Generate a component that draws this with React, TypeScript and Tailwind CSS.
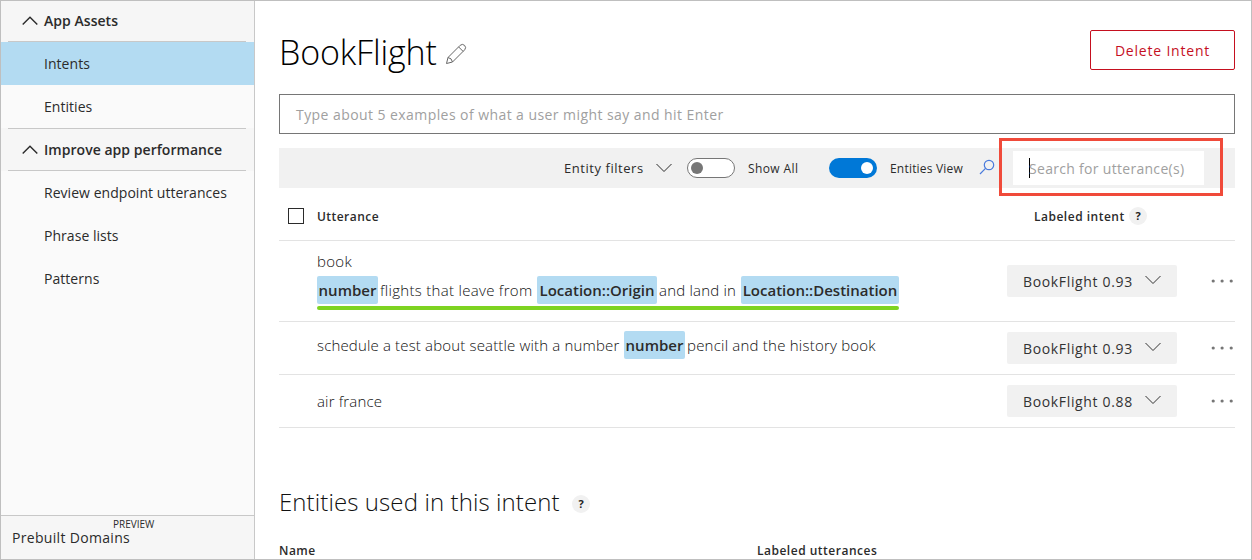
import type { ReactNode } from "react";

function Chevron({ className, d = "M0.5 1 8 8.5 15.5 1" }: { className: string; d?: string }) {
  return (
    <svg viewBox="0 0 16 10" className={className} fill="none" stroke="currentColor">
      <path d={d} />
    </svg>
  );
}

function SectionHeader({ children, className }: { children: ReactNode; className: string }) {
  return (
    <div className={`bg-[#f6f6f6] pr-2 pl-[7px] ${className}`}>
      <div className="flex h-full items-center border-b border-[#c8c8c8] pl-[14px] font-semibold tracking-[0.04px]">
        <Chevron className="mr-[6px] h-[10px] w-4 stroke-[1.4]" d="M0.7 8.6 8 1.2 15.3 8.6" />
        {children}
      </div>
    </div>
  );
}

function Item({ children, active }: { children: ReactNode; active?: boolean }) {
  return (
    <div className={`flex h-[43px] items-center pl-[43px] tracking-[0.04px] ${active ? "bg-[#b3dbf2]" : ""}`}>
      {children}
    </div>
  );
}

function Help({ className }: { className: string }) {
  return (
    <span
      className={`flex size-[18px] items-center justify-center rounded-full bg-[#f1f1f1] text-[11px] font-bold text-[#222] ${className}`}
    >
      ?
    </span>
  );
}

function Entity({ children, className }: { children: ReactNode; className: string }) {
  return (
    <span
      className={`flex h-7 items-center justify-center rounded-[2px] bg-[#b3dbf2] font-semibold tracking-normal text-[#2b2b2b] ${className}`}
    >
      {children}
    </span>
  );
}

function Row({ children, className, score }: { children: ReactNode; className: string; score: string }) {
  return (
    <div className={`flex items-center border-b border-[#e3e3e3] pl-[38px] ${className}`}>
      <div className="w-[690px] text-[15px] font-light text-[#111]">{children}</div>
      <div className="flex h-8 w-[170px] items-center rounded-[2px] bg-[#f1f1f1] pt-px pl-4 text-sm text-[#333]">
        <span className="w-[122px] tracking-[0.65px]">BookFlight {score}</span>
        <Chevron className="mb-[4px] h-[10px] w-4" />
      </div>
      <svg viewBox="0 0 24 4" className="ml-[34px] h-1 w-6" fill="#767676">
        <circle cx="2.2" cy="2" r="1.6" />
        <circle cx="11.1" cy="2" r="1.6" />
        <circle cx="20.2" cy="2" r="1.6" />
      </svg>
    </div>
  );
}

export default function App() {
  return (
    <div className="flex h-[560px] w-[1252px] overflow-hidden border border-[#bfbfbf] bg-white font-['Open_Sans','Noto_Sans',sans-serif] whitespace-nowrap text-[#2b2b2b]">
      <aside className="flex w-[254px] shrink-0 flex-col border-r border-[#c8c8c8] bg-[#fafafa] text-sm">
        <SectionHeader className="h-[41px]">App Assets</SectionHeader>
        <Item active>Intents</Item>
        <Item>Entities</Item>
        <div className="bg-[#f6f6f6] pr-2 pl-[7px]">
          <div className="border-t border-[#c8c8c8]" />
        </div>
        <SectionHeader className="h-[42px]">Improve app performance</SectionHeader>
        <Item>Review endpoint utterances</Item>
        <Item>Phrase lists</Item>
        <Item>Patterns</Item>
        <div className="mt-auto h-[44px] border-t border-[#c8c8c8] bg-[#f6f6f6] pt-[2px] pl-[11px]">
          <div className="pl-[101px] text-[10px] leading-[12px]">PREVIEW</div>
          <div className="text-sm leading-[16px] font-medium tracking-[0.32px]">Prebuilt Domains</div>
        </div>
      </aside>

      <main className="flex w-[996px] shrink-0 flex-col pl-6">
        <div className="flex w-[956px] flex-col">
          <div className="flex h-[93px] items-center justify-between">
            <div className="flex items-center pt-[8px]">
              <h1 className="w-[166px] text-[34px] leading-[40px] font-light tracking-[-0.15px] text-black">
                BookFlight
              </h1>
              <svg viewBox="0 0 22 22" className="mt-[4px] size-[22px]" fill="none" stroke="#666" strokeLinejoin="round">
                <path d="M1.5 20.5 3 14.5 15.2 2.3Q17.4.4 19.6 2.4 21.6 4.6 19.7 6.8L7.5 19ZM3 14.5Q6.8 15 7.5 19M13.6 3.9 18.1 8.4" />
              </svg>
            </div>
            <button className="mt-[5px] h-10 w-[145px] rounded-[2px] border border-[#c50f1f] text-[14px] font-medium tracking-[0.8px] text-[#c50f1f]">
              Delete Intent
            </button>
          </div>

          <div className="flex h-10 items-center border border-[#767676] pt-[2px] pl-4 text-sm tracking-[0.43px] text-[#a0a0a0]">
            Type about 5 examples of what a user might say and hit Enter
          </div>

          <div className="relative mt-[14px] flex h-10 items-center bg-[#f1f1f1] pl-[285px]">
            <span className="w-[92px] pt-[2px] text-[13px] tracking-[0.55px]">Entity filters</span>
            <Chevron className="h-[10px] w-4" />
            <span className="ml-[15px] flex h-5 w-12 items-center rounded-full border border-[#767676] bg-white pl-[3px]">
              <span className="size-3 rounded-full bg-[#767676]" />
            </span>
            <span className="ml-[13px] w-[81px] pt-[2px] text-[12px] tracking-[0.4px]">Show All</span>
            <span className="flex h-5 w-12 items-center justify-end rounded-full bg-[#0078d7] pr-1">
              <span className="size-3 rounded-full bg-white" />
            </span>
            <span className="ml-[13px] w-[89px] pt-[2px] text-[12px] tracking-[0.2px]">Entities View</span>
            <svg viewBox="0 0 16 16" className="mb-[3px] size-4" fill="none" stroke="#4a7bdc" strokeWidth="1.2">
              <circle cx="10" cy="6" r="4.7" />
              <path d="M6.5 9.4 1 15" />
            </svg>
            <div className="ml-[18px] flex h-[34px] w-[191px] items-center bg-white pl-4 text-sm text-[#a0a0a0]">
              <span className="h-5 border-l border-black" />
              <span className="-ml-px pt-[2px] tracking-[0.3px]">Search for utterance(s)</span>
            </div>
            <div className="absolute top-[-10px] left-[720px] h-[58px] w-[224px] border-[3px] border-[#f04a3a]" />
          </div>

          <div className="flex h-[53px] items-center border-b border-[#e3e3e3] pt-[4px] pl-[9px] text-[12px] font-semibold">
            <span className="size-4 border border-[#2b2b2b]" />
            <span className="ml-[13px] w-[717px] pt-px tracking-[0.45px]">Utterance</span>
            <span className="w-[95px] pt-px tracking-[0.5px]">Labeled intent</span>
            <Help className="" />
          </div>

          <Row className="h-[81px]" score="0.93">
            <div className="-mt-[3px] flex w-[582px] flex-col">
              <span className="h-[24px] leading-[24px] tracking-[0.3px]">book</span>
              <div className="flex items-center pt-[3px]">
                <Entity className="w-[61px]">number</Entity>
                <span className="w-[159px] pl-[2px] tracking-[0.3px]">flights that leave from</span>
                <Entity className="w-[120px]">Location::Origin</Entity>
                <span className="w-[84px] pl-[2px] tracking-[0.2px]">and land in</span>
                <Entity className="w-[158px]">Location::Destination</Entity>
              </div>
              <div className="mt-[2px] h-1 rounded-full bg-[#7ed321]" />
            </div>
          </Row>
          <Row className="h-[53px]" score="0.93">
            <div className="mb-[6px] flex items-center">
              <span className="w-[307px] pt-px tracking-[0.16px]">schedule a test about seattle with a number</span>
              <Entity className="w-[61px]">number</Entity>
              <span className="pt-px pl-[2px] tracking-[0.22px]">pencil and the history book</span>
            </div>
          </Row>
          <Row className="h-[53px]" score="0.88">
            <div className="pt-px tracking-[0.15px]">air france</div>
          </Row>

          <div className="mt-[58px] flex h-8 items-center">
            <h2 className="w-[293px] text-[24px] leading-8 font-light tracking-[0.1px] text-[#111]">
              Entities used in this intent
            </h2>
            <Help className="mt-1" />
          </div>
          <div className="mt-[24px] flex h-[18px] text-[12px] leading-[18px] font-semibold">
            <span className="w-[478px] tracking-[0.5px]">Name</span>
            <span className="tracking-[0.5px]">Labeled utterances</span>
          </div>
        </div>
      </main>
    </div>
  );
}
